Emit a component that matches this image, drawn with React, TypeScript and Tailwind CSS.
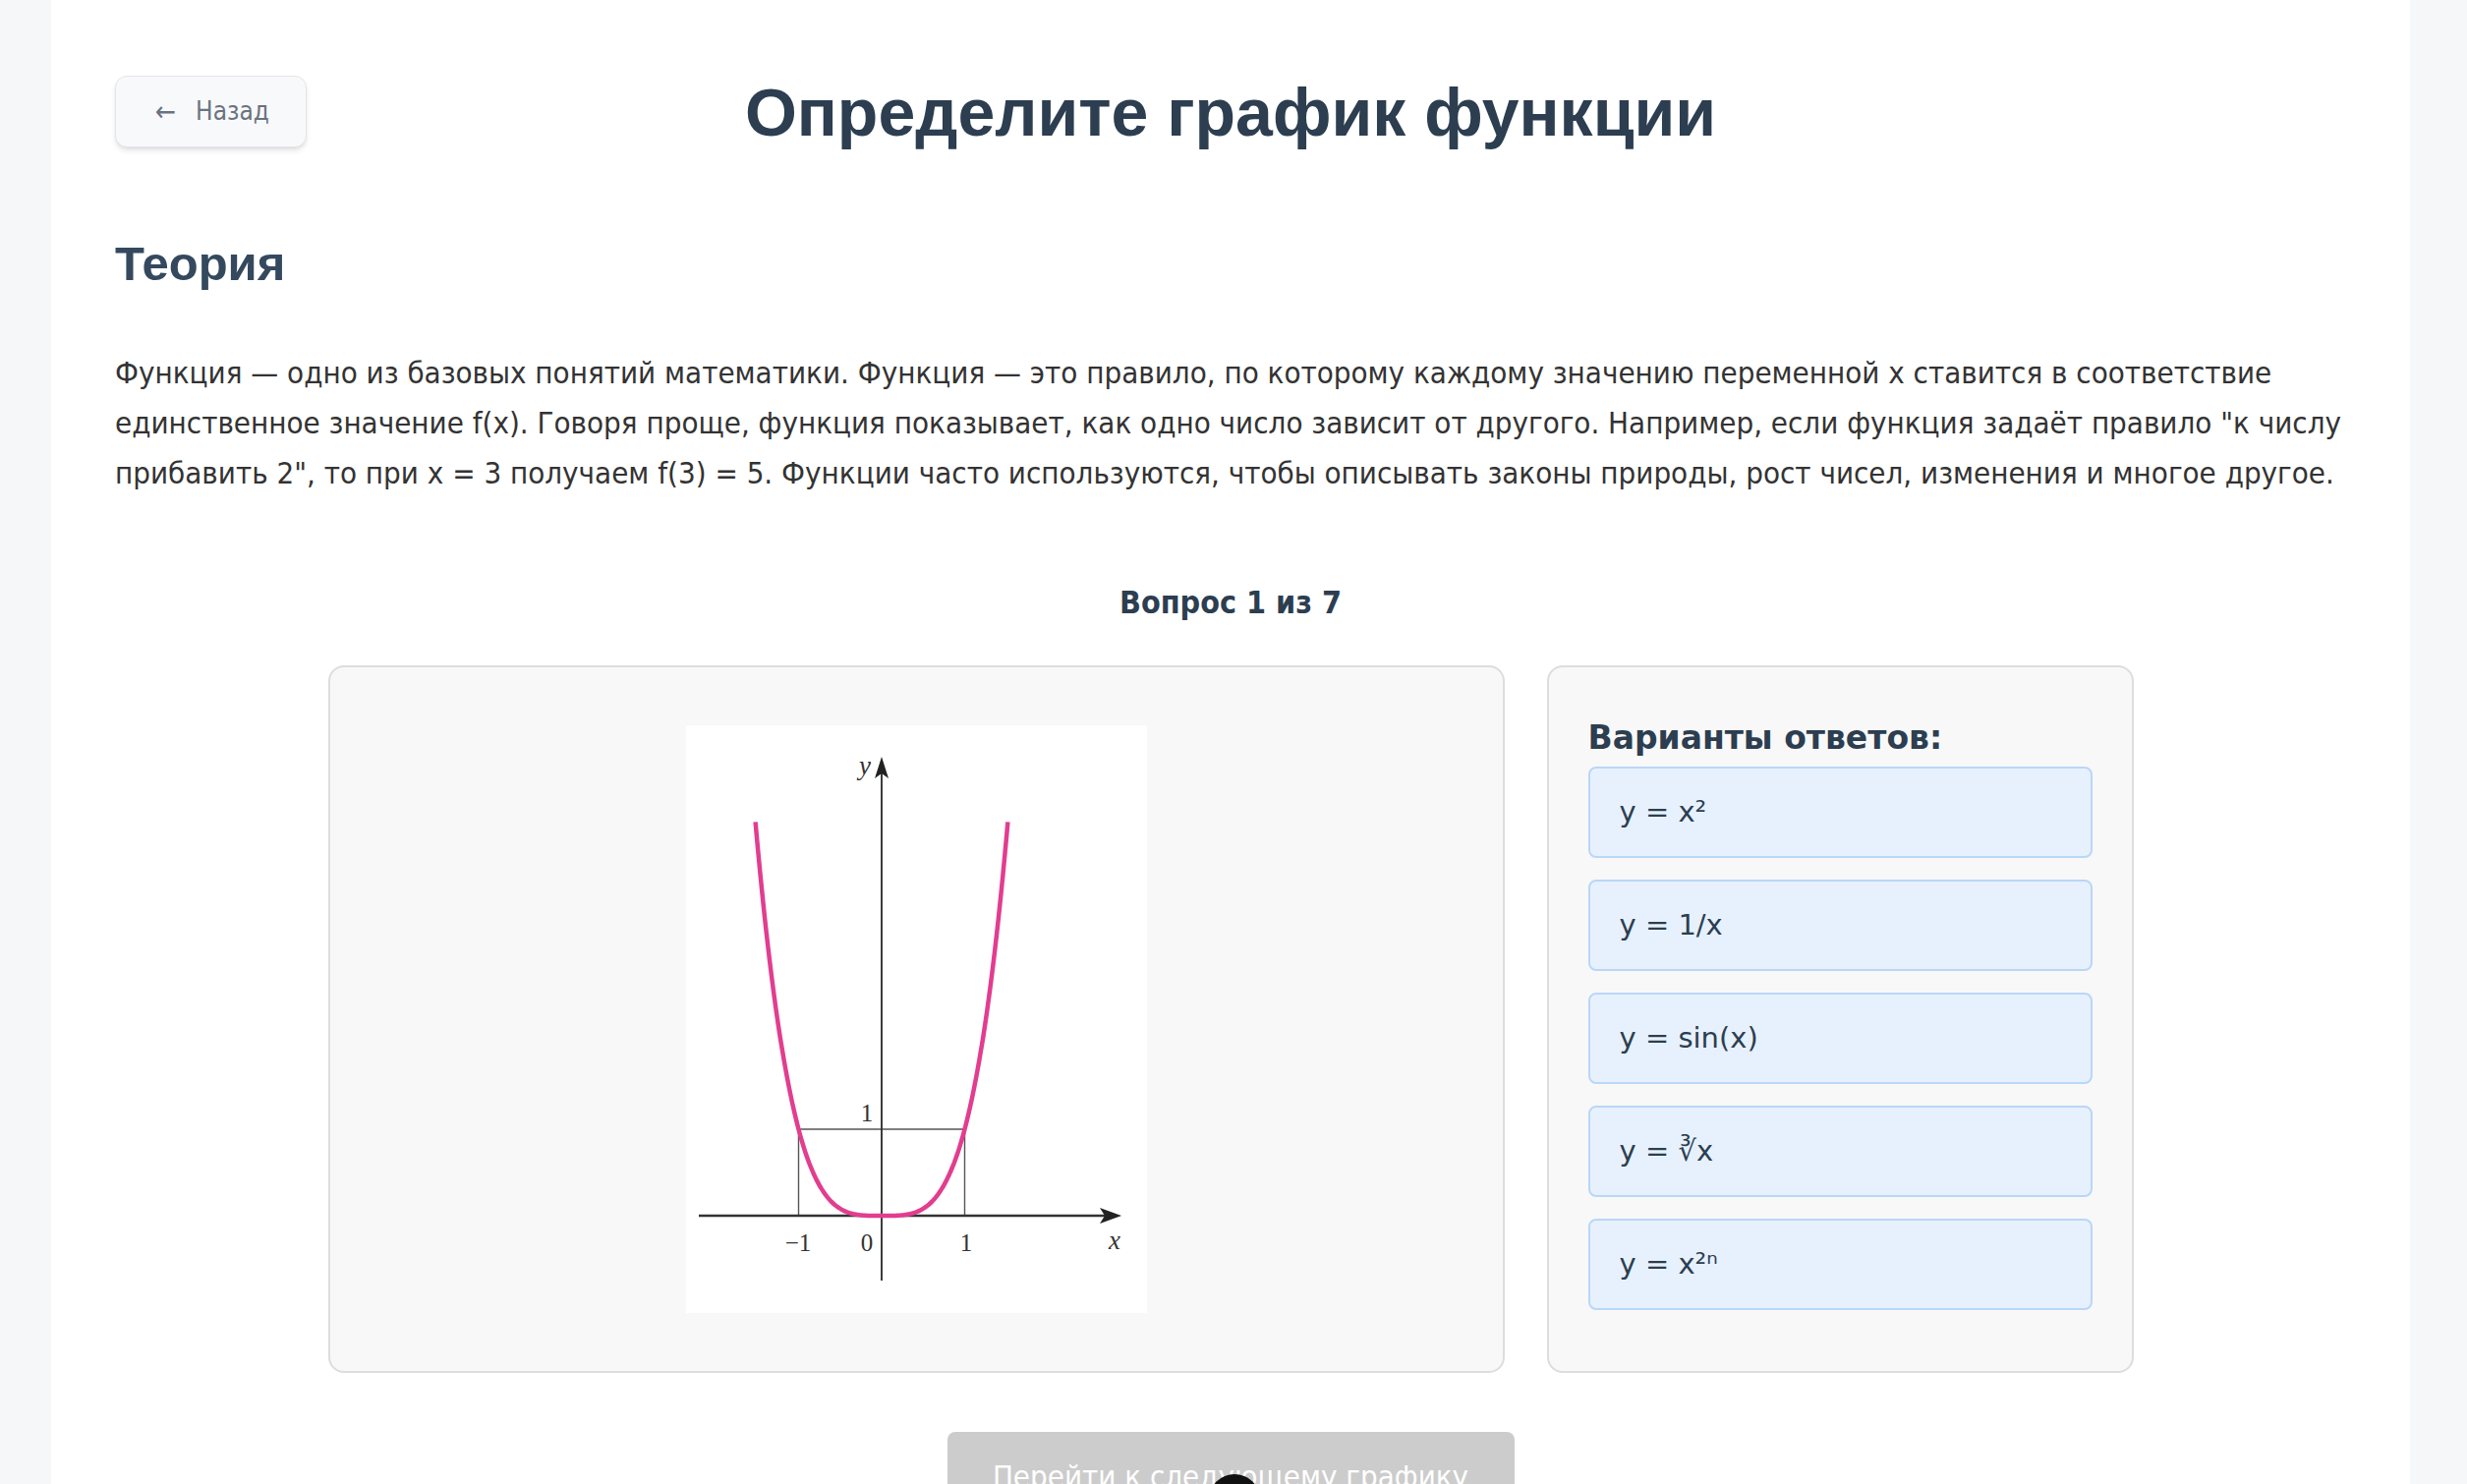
import React from 'react';

const answers = ['y = x²', 'y = 1/x', 'y = sin(x)', 'y = ∛x', 'y = x²ⁿ'];

const body = "font-['DejaVu_Sans_Condensed','Noto_Sans',sans-serif]";

// graph of y = x^4 style curve, drawn in image pixel coords
const ox = 199;
const oy = 499;
const ux = 84.5;
const uy = 88;

function curvePath() {
  const pts: string[] = [];
  for (let i = 0; i <= 160; i++) {
    const x = -1.52 + (3.04 * i) / 160;
    const y = Math.pow(Math.abs(x), 3.62);
    pts.push(`${(ox + x * ux).toFixed(1)},${(oy - y * uy).toFixed(1)}`);
  }
  return 'M' + pts.join(' L');
}

function Graph() {
  return (
    <div className="w-[469px] h-[598px] bg-white">
      <svg width="469" height="598" viewBox="0 0 469 598">
        {/* unit box */}
        <line x1={ox - ux} y1={oy - uy} x2={ox + ux} y2={oy - uy} stroke="#555" strokeWidth="1.4" />
        <line x1={ox - ux} y1={oy - uy} x2={ox - ux} y2={oy} stroke="#555" strokeWidth="1.4" />
        <line x1={ox + ux} y1={oy - uy} x2={ox + ux} y2={oy} stroke="#555" strokeWidth="1.4" />
        {/* axes */}
        <line x1="13" y1={oy} x2="430" y2={oy} stroke="#333" strokeWidth="2.4" />
        <polygon points={`443,${oy} 421,${oy - 8} 426,${oy} 421,${oy + 8}`} fill="#222" />
        <line x1={ox} y1="565" x2={ox} y2="44" stroke="#333" strokeWidth="1.9" />
        <polygon points={`${ox},32 ${ox - 7},54 ${ox},49 ${ox + 7},54`} fill="#222" />
        <path d={curvePath()} fill="none" stroke="#e23d8f" strokeWidth="4.5" strokeLinejoin="round" />
        <g fontFamily="'Liberation Serif', serif" fill="#333" fontSize="25">
          <text x="182" y="50" fontStyle="italic" fontSize="27" textAnchor="middle">y</text>
          <text x="184" y="403" textAnchor="middle">1</text>
          <text x="114" y="535" textAnchor="middle">−1</text>
          <text x="184" y="535" textAnchor="middle">0</text>
          <text x="285" y="535" textAnchor="middle">1</text>
          <text x="436" y="533" fontStyle="italic" fontSize="27" textAnchor="middle">x</text>
        </g>
      </svg>
    </div>
  );
}

export default function App() {
  return (
    <div className="h-[1510px] overflow-hidden bg-[#f6f7f9]">
      <div className="relative ml-[52px] w-[2400px] min-h-[1510px] bg-white px-[65px] pt-[77px] pb-10">
        <div className="grid grid-cols-[1fr_auto_1fr] items-center">
          <div>
            <button
              className={`${body} flex h-[73px] w-[195px] items-center gap-5 rounded-xl border border-[#e3e5e9] bg-[#f8f9fa] pl-10 text-[26px] text-[#6b7280] shadow-md`}
            >
              <span className="text-[28px] leading-none">←</span>
              <span>Назад</span>
            </button>
          </div>
          <h1 className="font-['Liberation_Sans',Arial,sans-serif] text-[68px] font-bold leading-none text-[#2c3e50]">
            Определите график функции
          </h1>
          <div />
        </div>

        <h2 className="mt-[94px] font-['Liberation_Sans',Arial,sans-serif] text-[49px] font-bold leading-none text-[#34495e]">
          Теория
        </h2>
        <p className={`${body} mt-[61px] text-[31px] leading-[51px] text-[#333]`}>
          Функция — одно из базовых понятий математики. Функция — это правило, по которому каждому значению
          переменной x ставится в соответствие единственное значение f(x). Говоря проще, функция показывает, как
          одно число зависит от другого. Например, если функция задаёт правило "к числу прибавить 2", то при x = 3
          получаем f(3) = 5. Функции часто используются, чтобы описывать законы природы, рост чисел, изменения и
          многое другое.
        </p>

        <div className={`${body} mt-[90px] text-center text-[32px] font-bold leading-none text-[#2c3e50]`}>
          Вопрос 1 из 7
        </div>

        <div className="mx-auto mt-[48px] flex w-[1837px] gap-[43px]">
          <div className="flex w-[1197px] shrink-0 items-center justify-center rounded-2xl border-2 border-[#dddddd] bg-[#f8f8f8]">
            <Graph />
          </div>
          <div className="w-[597px] shrink-0 rounded-2xl border-2 border-[#dddddd] bg-[#f8f8f8] p-10 font-['DejaVu_Sans',Verdana,sans-serif]">
            <h3 className="mt-[14px] mb-[12px] text-[33px] font-bold leading-[35px] text-[#2c3e50]">Варианты ответов:</h3>
            <div className="flex flex-col gap-[22px]">
              {answers.map((a) => (
                <div
                  key={a}
                  className="flex h-[93px] items-center rounded-lg border-2 border-[#b9d7f7] bg-[#e7f1fd] px-[30px] text-[29px] text-[#2c3e50]"
                >
                  {a}
                </div>
              ))}
            </div>
            <div className="h-[22px]" />
          </div>
        </div>

        <div className="mt-[60px] flex justify-center">
          <button
            className={`${body} h-[90px] w-[577px] rounded-lg bg-[#cccccc] text-[31px] text-white`}
          >
            Перейти к следующему графику
          </button>
        </div>

        <div className="absolute left-[1178px] top-[1500px] h-[52px] w-[52px] rounded-full bg-[#111]" />
      </div>
    </div>
  );
}
